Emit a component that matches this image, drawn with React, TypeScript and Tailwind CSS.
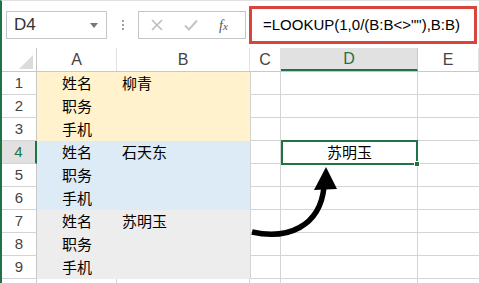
import React from "react";

const cjk = { fontFamily: '"Noto Sans CJK SC", "Liberation Sans", sans-serif' };
const sans = { fontFamily: '"Liberation Sans", Arial, sans-serif' };

const cols = [
  { key: "A", w: 80 },
  { key: "B", w: 133 },
  { key: "C", w: 31 },
  { key: "D", w: 137 },
  { key: "E", w: 61 },
];

const rows: { n: number; a: string; b: string; bg: string }[] = [
  { n: 1, a: "姓名", b: "柳青", bg: "bg-[#fff2cc]" },
  { n: 2, a: "职务", b: "", bg: "bg-[#fff2cc]" },
  { n: 3, a: "手机", b: "", bg: "bg-[#fff2cc]" },
  { n: 4, a: "姓名", b: "石天东", bg: "bg-[#ddebf7]" },
  { n: 5, a: "职务", b: "", bg: "bg-[#ddebf7]" },
  { n: 6, a: "手机", b: "", bg: "bg-[#ddebf7]" },
  { n: 7, a: "姓名", b: "苏明玉", bg: "bg-[#ededed]" },
  { n: 8, a: "职务", b: "", bg: "bg-[#ededed]" },
  { n: 9, a: "手机", b: "", bg: "bg-[#ededed]" },
];

export default function App() {
  return (
    <div className="relative w-[479px] h-[283px] overflow-hidden bg-white border-l-2 border-[#217346] border-t border-t-[#e0e0e0]" style={sans}>
      {/* toolbar */}
      <div className="flex items-start h-[47px]">
        <div className="ml-[4px] mt-[10px] w-[101px] h-[28px] border border-[#c6c6c6] flex items-center justify-between pl-[7px] pr-[8px]">
          <span className="text-[17px] text-[#333]">D4</span>
          <svg width="8" height="5" viewBox="0 0 8 5"><path d="M0 0h8L4 5z" fill="#777" /></svg>
        </div>
        <div className="ml-[15px] mt-[19px] flex flex-col gap-[2px]">
          <div className="w-[2px] h-[2px] bg-[#a0a0a0]" />
          <div className="w-[2px] h-[2px] bg-[#a0a0a0]" />
          <div className="w-[2px] h-[2px] bg-[#a0a0a0]" />
        </div>
        <div className="ml-[14px] mt-[10px] w-[108px] h-[28px] border border-[#c6c6c6] flex items-center">
          <svg className="ml-[12px]" width="12" height="12" viewBox="0 0 12 12"><path d="M1 1L11 11M11 1L1 11" stroke="#bdbdbd" strokeWidth="1.6" /></svg>
          <svg className="ml-[21px]" width="14" height="12" viewBox="0 0 14 12"><path d="M1 6.5L5 10.5L13 1.5" stroke="#c4c4c4" strokeWidth="2" fill="none" /></svg>
          <span className="ml-[21px] text-[14px] italic text-[#555]" style={{ fontFamily: '"Liberation Serif", serif' }}>f<span className="text-[11px]">x</span></span>
        </div>
        <div className="ml-[3px] mt-[5px] w-[228px] h-[38px] border-[3px] border-[#d9443c] flex items-center pl-[11px]">
          <span className="text-[15px] text-black whitespace-nowrap">=LOOKUP(1,0/(B:B&lt;&gt;""),B:B)</span>
        </div>
      </div>

      {/* header row */}
      <div className="flex h-[24px] border-b border-[#c8c8c8]">
        <div className="w-[35px] shrink-0 border-r border-[#c8c8c8] flex items-end justify-end pr-[3px] pb-[2px]">
          <svg width="14" height="14" viewBox="0 0 14 14"><path d="M14 0V14H0z" fill="#dcdcdc" /></svg>
        </div>
        {cols.map((c) =>
          c.key === "D" ? (
            <div key={c.key} style={{ width: c.w }} className="shrink-0 bg-[#e1e1e1] border-r border-[#c8c8c8] border-b-2 border-b-[#217346] flex items-center justify-center text-[16px] text-[#217346]">
              {c.key}
            </div>
          ) : (
            <div key={c.key} style={{ width: c.w }} className="shrink-0 border-r border-[#e0e0e0] flex items-center justify-center text-[16px] text-[#444]">
              {c.key}
            </div>
          )
        )}
      </div>

      {/* body */}
      {rows.map((r) => (
        <div key={r.n} className="flex h-[23px]">
          <div
            className={
              r.n === 4
                ? "w-[35px] shrink-0 bg-[#e1e1e1] border-r-2 border-[#217346] border-b border-b-[#d4d4d4] flex items-center justify-center text-[15px] text-[#217346]"
                : "w-[35px] shrink-0 border-r border-[#c8c8c8] border-b border-b-[#d4d4d4] flex items-center justify-center text-[15px] text-[#444]"
            }
          >
            {r.n}
          </div>
          <div className={`w-[213px] shrink-0 ${r.bg} flex items-center text-[15px] text-black`} style={cjk}>
            <span className="ml-[25px] w-[60px]">{r.a}</span>
            <span>{r.b}</span>
          </div>
          <div className="w-[31px] shrink-0 border-l border-r border-b border-[#d4d4d4]" />
          {r.n === 4 ? (
            <div className="relative w-[137px] shrink-0 border-2 border-[#217346] -mt-[1px] h-[25px] flex items-center justify-center text-[15px] text-black" style={cjk}>
              苏明玉
              <div className="absolute -right-[4px] -bottom-[4px] w-[6px] h-[6px] bg-[#217346] border border-white" />
            </div>
          ) : (
            <div className="w-[137px] shrink-0 border-r border-b border-[#d4d4d4]" />
          )}
          <div className="w-[61px] shrink-0 border-b border-[#d4d4d4]" />
        </div>
      ))}
      <div className="flex h-[10px]">
        <div className="w-[35px] shrink-0 border-r border-[#c8c8c8]" />
        <div className="w-[80px] shrink-0 border-r border-[#d4d4d4]" />
        <div className="w-[133px] shrink-0 border-r border-[#d4d4d4]" />
        <div className="w-[31px] shrink-0 border-r border-[#d4d4d4]" />
        <div className="w-[137px] shrink-0 border-r border-[#d4d4d4]" />
      </div>

      {/* arrow overlay */}
      <svg className="absolute left-0 top-0 pointer-events-none" width="479" height="283" viewBox="0 0 479 283">
        <path d="M250 231 C 285 239, 318 226, 322 186" stroke="#000" strokeWidth="5.5" fill="none" />
        <path d="M324 166 L312 189 L335 188 Z" fill="#000" />
      </svg>
    </div>
  );
}
